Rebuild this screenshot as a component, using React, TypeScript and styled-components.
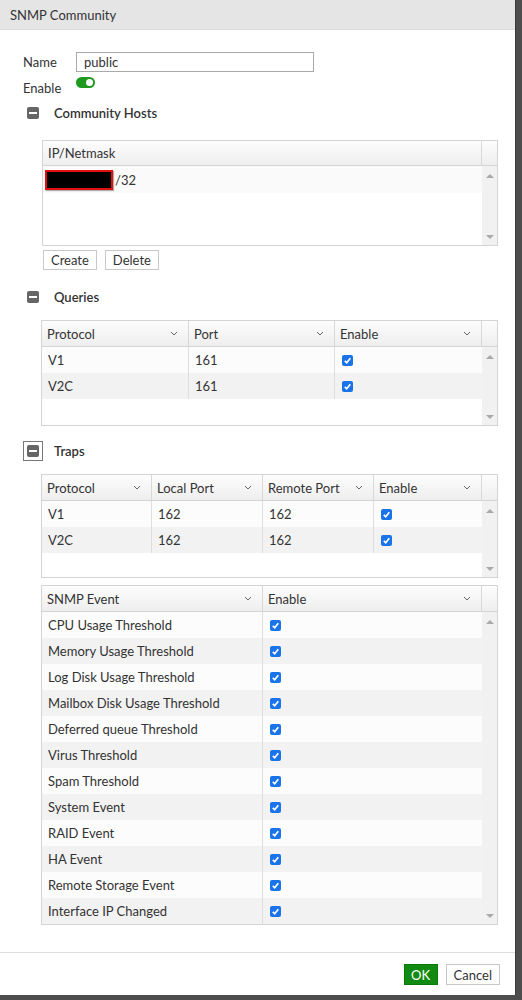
import React from 'react';
import styled, { createGlobalStyle } from 'styled-components';

const GlobalStyle = createGlobalStyle`
  html, body {
    margin: 0;
    padding: 0;
    background: #4d4d4d;
  }
  body {
    font-family: Lato, "Open Sans", "Liberation Sans", sans-serif;
    font-size: 13px;
    color: #333;
  }
`;

type Column = { label: string; width: string; sort?: boolean };

const Chevron: React.FC = () => (
    <svg width="8" height="5" viewBox="0 0 8 5">
        <path d="M1 1 L4 4 L7 1" fill="none" stroke="#666" strokeWidth="1" />
    </svg>
);

const CheckBox: React.FC = () => (
    <CheckMark>
        <svg width="9" height="9" viewBox="0 0 9 9">
            <path d="M1.8 4.8 L3.7 6.7 L7.3 2.3" fill="none" stroke="#fff" strokeWidth="1.7" />
        </svg>
    </CheckMark>
);

const SectionToggle: React.FC<{ focused?: boolean }> = ({ focused }) => (
    <IconBox $focused={!!focused}>
        <MinusIcon />
    </IconBox>
);

const DataTable: React.FC<{
    columns: Column[];
    rows: React.ReactNode[][];
    height: number;
}> = ({ columns, rows, height }) => {
    const cols = columns.map(c => c.width).join(' ');
    return (
        <Table $height={height}>
            <HeadRow $cols={cols}>
                {columns.map(c => (
                    <HeadCell key={c.label}>
                        <span>{c.label}</span>
                        {c.sort && <Chevron />}
                    </HeadCell>
                ))}
                <HeadCell />
            </HeadRow>
            <BodyArea>
                <Rows>
                    {rows.map((r, i) => (
                        <Row key={i} $cols={cols} $alt={i % 2 === 1}>
                            {r.map((cell, j) => (
                                <Cell key={j}>{cell}</Cell>
                            ))}
                        </Row>
                    ))}
                </Rows>
                <Track>
                    <Arrow $up />
                    <Arrow $up={false} />
                </Track>
            </BodyArea>
        </Table>
    );
};

const events = [
    'CPU Usage Threshold',
    'Memory Usage Threshold',
    'Log Disk Usage Threshold',
    'Mailbox Disk Usage Threshold',
    'Deferred queue Threshold',
    'Virus Threshold',
    'Spam Threshold',
    'System Event',
    'RAID Event',
    'HA Event',
    'Remote Storage Event',
    'Interface IP Changed',
];

const App: React.FC = () => {
    return (
        <>
            <GlobalStyle />
            <Page>
                <Dialog>
                    <TitleBar>SNMP Community</TitleBar>
                    <Body>
                        <FieldRow $top={22}>
                            <Label>Name</Label>
                            <TextInput defaultValue="public" />
                        </FieldRow>
                        <FieldRow $top={6}>
                            <Label>Enable</Label>
                            <Switch>
                                <Knob />
                            </Switch>
                        </FieldRow>

                        <SectionHeader $top={5}>
                            <SectionToggle />
                            <SectionTitle>Community Hosts</SectionTitle>
                        </SectionHeader>
                        <Spacer $h={17} />
                        <HostsTable>
                            <HostsHead>
                                <HeadCell>IP/Netmask</HeadCell>
                                <HeadCell />
                            </HostsHead>
                            <BodyArea>
                                <Rows>
                                    <HostRow>
                                        <Redacted />
                                        <span>/32</span>
                                    </HostRow>
                                </Rows>
                                <Track>
                                    <Arrow $up />
                                    <Arrow $up={false} />
                                </Track>
                            </BodyArea>
                        </HostsTable>
                        <ButtonRow>
                            <PlainButton>Create</PlainButton>
                            <PlainButton>Delete</PlainButton>
                        </ButtonRow>

                        <SectionHeader $top={17}>
                            <SectionToggle />
                            <SectionTitle>Queries</SectionTitle>
                        </SectionHeader>
                        <Spacer $h={13} />
                        <DataTable
                            height={106}
                            columns={[
                                { label: 'Protocol', width: '147px', sort: true },
                                { label: 'Port', width: '146px', sort: true },
                                { label: 'Enable', width: '1fr', sort: true },
                            ]}
                            rows={[
                                ['V1', '161', <CheckBox />],
                                ['V2C', '161', <CheckBox />],
                            ]}
                        />

                        <SectionHeader $top={15}>
                            <SectionToggle focused />
                            <SectionTitle>Traps</SectionTitle>
                        </SectionHeader>
                        <Spacer $h={13} />
                        <DataTable
                            height={104}
                            columns={[
                                { label: 'Protocol', width: '110px', sort: true },
                                { label: 'Local Port', width: '111px', sort: true },
                                { label: 'Remote Port', width: '111px', sort: true },
                                { label: 'Enable', width: '1fr', sort: true },
                            ]}
                            rows={[
                                ['V1', '162', '162', <CheckBox />],
                                ['V2C', '162', '162', <CheckBox />],
                            ]}
                        />
                        <Spacer $h={7} />
                        <DataTable
                            height={340}
                            columns={[
                                { label: 'SNMP Event', width: '221px', sort: true },
                                { label: 'Enable', width: '1fr', sort: true },
                            ]}
                            rows={events.map(e => [e, <CheckBox />])}
                        />
                    </Body>
                    <Footer>
                        <OkButton>OK</OkButton>
                        <PlainButton>Cancel</PlainButton>
                    </Footer>
                </Dialog>
            </Page>
        </>
    );
};

export default App;

const Page = styled.div`
  width: 522px;
  height: 1000px;
  overflow: hidden;
`;

const Dialog = styled.div`
  width: 515px;
  height: 995px;
  background: #fff;
  display: flex;
  flex-direction: column;
  border-right: 1px solid #3a3a3a;
`;

const TitleBar = styled.div`
  height: 30px;
  flex-shrink: 0;
  background: #e5e5e5;
  border-bottom: 1px solid #dcdcdc;
  box-sizing: border-box;
  display: flex;
  align-items: center;
  padding-left: 10px;
  font-size: 13px;
  color: #333;
`;

const Body = styled.div`
  flex: 1;
  display: flex;
  flex-direction: column;
`;

const FieldRow = styled.div<{ $top: number }>`
  display: flex;
  align-items: center;
  height: 20px;
  margin-top: ${p => p.$top}px;
  padding-left: 23px;
`;

const Label = styled.div`
  width: 53px;
  font-size: 13px;
  color: #333;
`;

const TextInput = styled.input`
  width: 238px;
  height: 20px;
  box-sizing: border-box;
  border: 1px solid #aaa;
  padding: 0 7px;
  font-family: inherit;
  font-size: 13px;
  color: #333;
  outline: none;
`;

const Switch = styled.div`
  width: 19px;
  height: 11px;
  border-radius: 6px;
  background: #1e9a1e;
  display: flex;
  align-items: center;
  justify-content: flex-end;
  padding: 0 2px;
  box-sizing: border-box;
  margin-top: -12px;
`;

const Knob = styled.div`
  width: 7px;
  height: 7px;
  border-radius: 50%;
  background: #fff;
`;

const SectionHeader = styled.div<{ $top: number }>`
  display: flex;
  align-items: center;
  height: 20px;
  margin-top: ${p => p.$top}px;
  padding-left: 27px;
`;

const IconBox = styled.div<{ $focused: boolean }>`
  width: 12px;
  height: 12px;
  display: flex;
  outline: ${p => (p.$focused ? '1px solid #777' : 'none')};
  outline-offset: 3px;
`;

const MinusIcon = styled.div`
  width: 12px;
  height: 12px;
  border-radius: 2px;
  background: #666;
  position: relative;

  &::after {
    content: '';
    position: absolute;
    left: 2px;
    right: 2px;
    top: 5px;
    height: 2px;
    background: #fff;
  }
`;

const SectionTitle = styled.div`
  margin-left: 15px;
  font-size: 13px;
  font-weight: 600;
  color: #333;
`;

const Spacer = styled.div<{ $h: number }>`
  height: ${p => p.$h}px;
  flex-shrink: 0;
`;

const Table = styled.div<{ $height: number }>`
  margin-left: 41px;
  width: 457px;
  height: ${p => p.$height}px;
  box-sizing: border-box;
  border: 1px solid #d4d4d4;
  display: flex;
  flex-direction: column;
  flex-shrink: 0;
`;

const HeadRow = styled.div<{ $cols: string }>`
  display: grid;
  grid-template-columns: ${p => p.$cols} 15px;
  height: 25px;
  flex-shrink: 0;
  background: linear-gradient(#fdfdfd, #eeeeee);
  border-bottom: 1px solid #d4d4d4;
`;

const HeadCell = styled.div`
  display: flex;
  align-items: center;
  justify-content: space-between;
  padding: 0 10px 0 5px;
  border-right: 1px solid #d8d8d8;
  font-size: 13px;
  color: #333;
  white-space: nowrap;

  &:last-child {
    border-right: none;
  }
`;

const BodyArea = styled.div`
  flex: 1;
  display: flex;
  min-height: 0;
`;

const Rows = styled.div`
  flex: 1;
  background: #fff;
`;

const Row = styled.div<{ $cols: string; $alt: boolean }>`
  display: grid;
  grid-template-columns: ${p => p.$cols};
  height: 26px;
  background: ${p => (p.$alt ? '#f2f2f2' : '#fcfcfc')};
`;

const Cell = styled.div`
  display: flex;
  align-items: center;
  padding-left: 6px;
  border-right: 1px solid #dedede;
  font-size: 13px;
  color: #333;
  white-space: nowrap;

  &:last-child {
    border-right: none;
    padding-left: 7px;
  }
`;

const Track = styled.div`
  width: 15px;
  flex-shrink: 0;
  background: #f1f1f1;
  display: flex;
  flex-direction: column;
  justify-content: space-between;
  align-items: center;
  padding: 8px 0 6px;
  box-sizing: border-box;
`;

const Arrow = styled.div<{ $up: boolean }>`
  width: 0;
  height: 0;
  border-left: 4px solid transparent;
  border-right: 4px solid transparent;
  ${p => (p.$up ? 'border-bottom: 4px solid #aaa;' : 'border-top: 4px solid #aaa;')}
`;

const CheckMark = styled.span`
  width: 11px;
  height: 11px;
  border-radius: 2px;
  background: #1a73e8;
  display: inline-flex;
  align-items: center;
  justify-content: center;
`;

const HostsTable = styled.div`
  margin-left: 42px;
  width: 456px;
  height: 106px;
  box-sizing: border-box;
  border: 1px solid #d4d4d4;
  display: flex;
  flex-direction: column;
  flex-shrink: 0;
`;

const HostsHead = styled.div`
  display: grid;
  grid-template-columns: 1fr 15px;
  height: 24px;
  flex-shrink: 0;
  background: linear-gradient(#fdfdfd, #eeeeee);
  border-bottom: 1px solid #d4d4d4;
`;

const HostRow = styled.div`
  height: 27px;
  display: flex;
  align-items: center;
  padding-left: 2px;
  background: #fafafa;
  font-size: 13px;
  color: #333;
`;

const Redacted = styled.span`
  width: 64px;
  height: 16px;
  background: #000;
  border: 2px solid #e01010;
  box-shadow: 1px 1px 1px rgba(0, 0, 0, 0.3);
  margin-right: 2px;
`;

const ButtonRow = styled.div`
  display: flex;
  gap: 8px;
  margin-top: 4px;
  padding-left: 43px;
`;

const PlainButton = styled.button`
  height: 20px;
  padding: 0 7px;
  border: 1px solid #c8c8c8;
  background: #fff;
  font-family: inherit;
  font-size: 13px;
  color: #333;
  cursor: pointer;
`;

const OkButton = styled.button`
  height: 21px;
  width: 34px;
  padding: 0;
  border: 1px solid #0b7a0b;
  background: #118a11;
  font-family: inherit;
  font-size: 13px;
  color: #fff;
  cursor: pointer;
`;

const Footer = styled.div`
  height: 43px;
  flex-shrink: 0;
  border-top: 1px solid #ddd;
  box-sizing: border-box;
  display: flex;
  justify-content: flex-end;
  align-items: flex-start;
  gap: 8px;
  padding: 11px 15px 0 0;

  & > button:last-child {
    height: 21px;
  }
`;
